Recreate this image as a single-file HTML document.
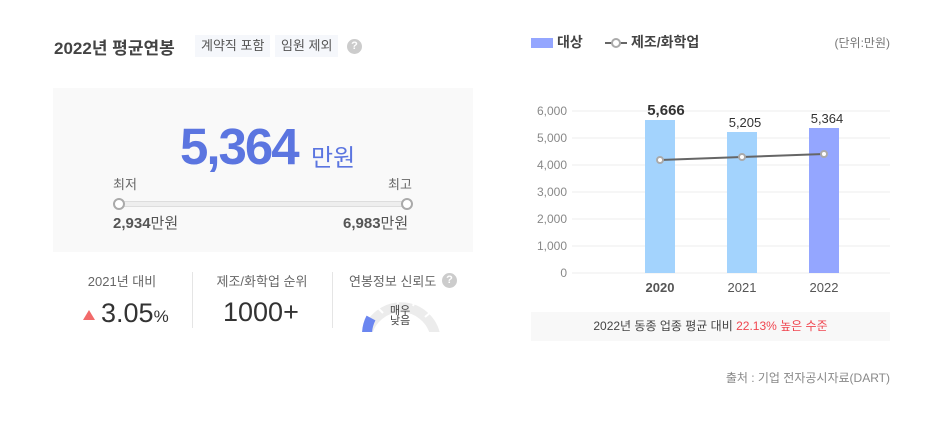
<!DOCTYPE html>
<html><head><meta charset="utf-8"><style>
*{margin:0;padding:0;box-sizing:border-box}
body{width:950px;height:429px;background:#fff;position:relative;overflow:hidden;font-family:"Liberation Sans","Noto Sans CJK KR",sans-serif;color:#333}
.a{position:absolute;white-space:nowrap}
.tag{position:absolute;top:35px;height:22px;background:#f5f7fb;font-size:13px;color:#555;line-height:22px;padding:0 6px}
.q{position:absolute;width:15px;height:15px;border-radius:50%;background:#ccc;color:#fff;font-size:11px;font-weight:bold;text-align:center;line-height:15px}
.lbl{font-size:13px;color:#666;text-align:center;width:140px}
</style></head><body>
<div class="a" style="left:54px;top:34px;font-size:17px;font-weight:bold;color:#444">2022년 평균연봉</div>
<div class="tag" style="left:195px">계약직 포함</div>
<div class="tag" style="left:275px">임원 제외</div>
<div class="q" style="left:347px;top:39px">?</div>

<div class="a" style="left:53px;top:88px;width:420px;height:164px;background:#f9f9f9"></div>
<div class="a" style="left:180px;top:117px;font-size:51px;font-weight:bold;color:#5b75e0;letter-spacing:-2px">5,364</div>
<div class="a" style="left:311px;top:138px;font-size:24px;color:#5b75e0">만원</div>
<div class="a" style="left:113px;top:174px;font-size:13px;color:#666">최저</div>
<div class="a" style="left:388px;top:174px;font-size:13px;color:#666">최고</div>
<div class="a" style="left:118px;top:201px;width:290px;height:6px;background:#eee;border:1px solid #ddd;border-radius:3px"></div>
<div class="a" style="left:113px;top:198px;width:12px;height:12px;border-radius:50%;background:#fff;border:2px solid #aaa"></div>
<div class="a" style="left:401px;top:198px;width:12px;height:12px;border-radius:50%;background:#fff;border:2px solid #aaa"></div>
<div class="a" style="left:113px;top:212px;font-size:15px;color:#555"><b>2,934</b>만원</div>
<div class="a" style="left:343px;top:212px;font-size:15px;color:#555"><b>6,983</b>만원</div>

<div class="a lbl" style="left:52px;top:271px">2021년 대비</div>
<div class="a" style="left:83px;top:298px;font-size:27px;color:#333"><span style="display:inline-block;width:0;height:0;border-left:6px solid transparent;border-right:6px solid transparent;border-bottom:10px solid #f26a6a;margin-right:6px;vertical-align:2px"></span>3.05<span style="font-size:17px">%</span></div>
<div class="a" style="left:192px;top:272px;width:1px;height:56px;background:#e5e5e5"></div>
<div class="a lbl" style="left:192px;top:271px">제조/화학업 순위</div>
<div class="a" style="left:223px;top:297px;font-size:27px;color:#333">1000+</div>
<div class="a" style="left:332px;top:272px;width:1px;height:56px;background:#e5e5e5"></div>
<div class="a" style="left:349px;top:271px;font-size:13px;color:#666">연봉정보 신뢰도</div>
<div class="q" style="left:442px;top:273px">?</div>
<svg class="a" style="left:355px;top:290px" width="90" height="42" viewBox="0 0 90 42">
<path d="M12 44 A35 35 0 0 1 80 44" fill="none" stroke="#ececec" stroke-width="10"/>
<path d="M12 44 A35 35 0 0 1 16 28" fill="none" stroke="#6b86f0" stroke-width="10"/>
<g stroke="#fff" stroke-width="2"><line x1="22" y1="17" x2="28" y2="23"/><line x1="41" y1="6" x2="43" y2="14"/><line x1="61" y1="8" x2="58" y2="16"/><line x1="76" y1="22" x2="70" y2="27"/></g>
</svg>
<div class="a" style="left:390px;top:306px;font-size:11px;color:#444;line-height:10px;text-align:center">매우<br>낮음</div>

<div class="a" style="left:531px;top:38px;width:22px;height:10px;background:#94a6ff"></div>
<div class="a" style="left:557px;top:32px;font-size:14px;font-weight:bold;color:#444">대상</div>
<svg class="a" style="left:604px;top:36px" width="24" height="14"><line x1="1" y1="7" x2="23" y2="7" stroke="#666" stroke-width="2"/><circle cx="12" cy="7" r="4" fill="#fff" stroke="#aaa" stroke-width="2"/></svg>
<div class="a" style="left:631px;top:32px;font-size:14px;font-weight:bold;color:#444">제조/화학업</div>
<div class="a" style="right:60px;top:34px;font-size:12px;color:#777">(단위:만원)</div>
<svg class="a" style="left:520px;top:95px" width="380" height="210" viewBox="520 95 380 210">
<g stroke="#eee" stroke-width="1">
<line x1="572" y1="111" x2="890" y2="111"/><line x1="572" y1="138" x2="890" y2="138"/><line x1="572" y1="165" x2="890" y2="165"/><line x1="572" y1="192" x2="890" y2="192"/><line x1="572" y1="219" x2="890" y2="219"/><line x1="572" y1="246" x2="890" y2="246"/><line x1="572" y1="273" x2="890" y2="273"/></g>
<g font-size="12" fill="#888" text-anchor="end" font-family="Liberation Sans,sans-serif">
<text x="567" y="115">6,000</text><text x="567" y="142">5,000</text><text x="567" y="169">4,000</text><text x="567" y="196">3,000</text><text x="567" y="223">2,000</text><text x="567" y="250">1,000</text><text x="567" y="277">0</text></g>
<rect x="645" y="120" width="30" height="153" fill="#a3d3fd"/>
<rect x="727" y="132" width="30" height="141" fill="#a3d3fd"/>
<rect x="809" y="128" width="30" height="145" fill="#94a6ff"/>
<g text-anchor="middle" font-family="Liberation Sans,sans-serif" fill="#333">
<text x="666" y="115" font-size="15" font-weight="bold">5,666</text>
<text x="745" y="127" font-size="13">5,205</text>
<text x="827" y="123" font-size="13">5,364</text>
<text x="660" y="292" font-size="13" font-weight="bold" fill="#555">2020</text>
<text x="742" y="292" font-size="13" fill="#555">2021</text>
<text x="824" y="292" font-size="13" fill="#555">2022</text></g>
<polyline points="660,160 742,157 824,154" fill="none" stroke="#666" stroke-width="2"/>
<g fill="#fff" stroke="#aaa" stroke-width="2"><circle cx="660" cy="160" r="3"/><circle cx="742" cy="157" r="3"/><circle cx="824" cy="154" r="3"/></g>
</svg>
<div class="a" style="left:531px;top:312px;width:359px;height:29px;background:#f8f8f8;font-size:12px;color:#444;text-align:center;line-height:29px">2022년 동종 업종 평균 대비 <span style="color:#f0454f">22.13% 높은 수준</span></div>
<div class="a" style="right:60px;top:369px;font-size:12px;color:#888">출처 : 기업 전자공시자료(DART)</div>
</body></html>
